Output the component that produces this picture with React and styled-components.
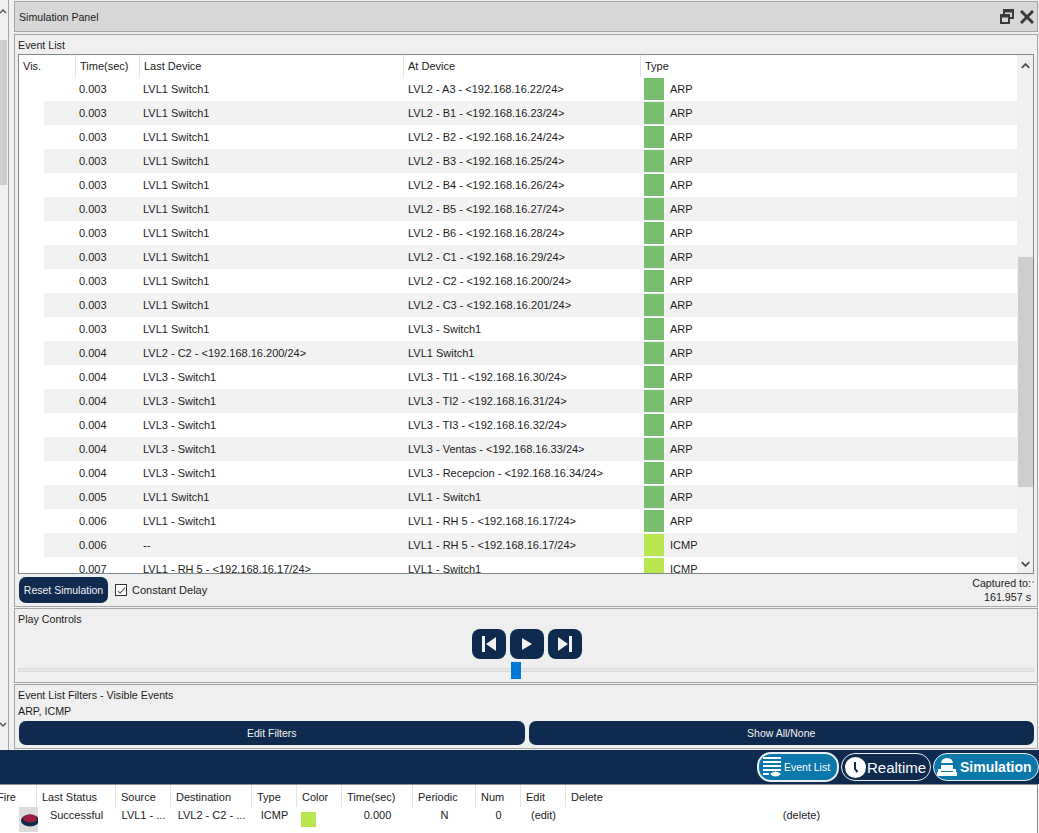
import styled, { createGlobalStyle } from "styled-components";

const Global = createGlobalStyle`
    html, body { margin: 0; padding: 0; background: #f0f0f0; }
    body { font-family: "Liberation Sans", Arial, sans-serif; font-size: 11px; color: #1c1c1c; }
`

const EVENTS = [
    ["0.003", "LVL1 Switch1", "LVL2 - A3 - <192.168.16.22/24>", "ARP"],
    ["0.003", "LVL1 Switch1", "LVL2 - B1 - <192.168.16.23/24>", "ARP"],
    ["0.003", "LVL1 Switch1", "LVL2 - B2 - <192.168.16.24/24>", "ARP"],
    ["0.003", "LVL1 Switch1", "LVL2 - B3 - <192.168.16.25/24>", "ARP"],
    ["0.003", "LVL1 Switch1", "LVL2 - B4 - <192.168.16.26/24>", "ARP"],
    ["0.003", "LVL1 Switch1", "LVL2 - B5 - <192.168.16.27/24>", "ARP"],
    ["0.003", "LVL1 Switch1", "LVL2 - B6 - <192.168.16.28/24>", "ARP"],
    ["0.003", "LVL1 Switch1", "LVL2 - C1 - <192.168.16.29/24>", "ARP"],
    ["0.003", "LVL1 Switch1", "LVL2 - C2 - <192.168.16.200/24>", "ARP"],
    ["0.003", "LVL1 Switch1", "LVL2 - C3 - <192.168.16.201/24>", "ARP"],
    ["0.003", "LVL1 Switch1", "LVL3 - Switch1", "ARP"],
    ["0.004", "LVL2 - C2 - <192.168.16.200/24>", "LVL1 Switch1", "ARP"],
    ["0.004", "LVL3 - Switch1", "LVL3 - TI1 - <192.168.16.30/24>", "ARP"],
    ["0.004", "LVL3 - Switch1", "LVL3 - TI2 - <192.168.16.31/24>", "ARP"],
    ["0.004", "LVL3 - Switch1", "LVL3 - TI3 - <192.168.16.32/24>", "ARP"],
    ["0.004", "LVL3 - Switch1", "LVL3 - Ventas - <192.168.16.33/24>", "ARP"],
    ["0.004", "LVL3 - Switch1", "LVL3 - Recepcion - <192.168.16.34/24>", "ARP"],
    ["0.005", "LVL1 Switch1", "LVL1 - Switch1", "ARP"],
    ["0.006", "LVL1 - Switch1", "LVL1 - RH 5 - <192.168.16.17/24>", "ARP"],
    ["0.006", "--", "LVL1 - RH 5 - <192.168.16.17/24>", "ICMP"],
    ["0.007", "LVL1 - RH 5 - <192.168.16.17/24>", "LVL1 - Switch1", "ICMP"],
]

const TYPE_COLORS = { ARP: "#77bf6f", ICMP: "#b9e650" }
const BOTTOM_COLS = ["Fire", "Last Status", "Source", "Destination", "Type", "Color", "Time(sec)", "Periodic", "Num", "Edit", "Delete"]

export default function App() {
    return (
        <Page>
            <Global />
            <Workspace>
                <LeftStrip>
                    <StripArrow viewBox="0 0 8 8"><path d="M0 5 L3 2 L6 5" /></StripArrow>
                    <StripThumb />
                    <StripArrow viewBox="0 0 8 8"><path d="M0 3 L3 6 L6 3" /></StripArrow>
                </LeftStrip>
                <Panels>
                    <TitleBar>
                        <TitleText>Simulation Panel</TitleText>
                        <TitleIcons>
                            <svg width="14" height="15" viewBox="0 0 14 15" fill="none" stroke="#3a3a3a" strokeWidth="2">
                                <path d="M4 5 V1 H13 V9 H9" />
                                <path d="M4 2 H13" strokeWidth="3" />
                                <rect x="1" y="6" width="8" height="8" />
                                <path d="M1 7 H9" strokeWidth="3" />
                            </svg>
                            <svg width="14" height="14" viewBox="0 0 14 14" fill="none" stroke="#3a3a3a" strokeWidth="3">
                                <path d="M1 1 L13 13 M13 1 L1 13" />
                            </svg>
                        </TitleIcons>
                    </TitleBar>

                    <EventGroup>
                        <GroupLabel>Event List</GroupLabel>
                        <TableFrame>
                            <TableBody>
                                <HeaderRow>
                                    <HeadCell>Vis.</HeadCell>
                                    <HeadCell>Time(sec)</HeadCell>
                                    <HeadCell>Last Device</HeadCell>
                                    <HeadCell>At Device</HeadCell>
                                    <HeadCell>Type</HeadCell>
                                </HeaderRow>
                                {EVENTS.map((e, i) => (
                                    <EventRow key={i}>
                                        <VisCell />
                                        <RowContent $striped={i % 2 === 1}>
                                            <div>{e[0]}</div>
                                            <div>{e[1]}</div>
                                            <div>{e[2]}</div>
                                            <TypeCell>
                                                <Swatch $color={TYPE_COLORS[e[3]]} />
                                                {e[3]}
                                            </TypeCell>
                                        </RowContent>
                                    </EventRow>
                                ))}
                            </TableBody>
                            <Scrollbar>
                                <ScrollArrow viewBox="0 0 16 23"><path d="M4 13 L8 9 L12 13" /></ScrollArrow>
                                <ScrollThumb />
                                <ScrollArrow viewBox="0 0 16 17"><path d="M4 6 L8 10 L12 6" /></ScrollArrow>
                            </Scrollbar>
                        </TableFrame>
                        <EventFooter>
                            <ResetButton>Reset Simulation</ResetButton>
                            <CheckBox>
                                <svg width="11" height="11" viewBox="0 0 11 11" fill="none" stroke="#666" strokeWidth="1.2">
                                    <path d="M2 6 L4.5 8.5 L10 2" />
                                </svg>
                            </CheckBox>
                            <span>Constant Delay</span>
                            <Captured>Captured to:<br />161.957 s</Captured>
                        </EventFooter>
                    </EventGroup>

                    <PlayGroup>
                        <GroupLabel>Play Controls</GroupLabel>
                        <PlayButtons>
                            <PlayButton>
                                <svg width="16" height="16" viewBox="0 0 16 16" fill="#f2f2f2">
                                    <rect x="1" y="0" width="3" height="16" /><path d="M15 1 V15 L5 8 Z" />
                                </svg>
                            </PlayButton>
                            <PlayButton>
                                <svg width="16" height="16" viewBox="0 0 16 16" fill="#f2f2f2"><path d="M3 2 V14 L13 8 Z" /></svg>
                            </PlayButton>
                            <PlayButton>
                                <svg width="16" height="16" viewBox="0 0 16 16" fill="#f2f2f2">
                                    <rect x="12" y="0" width="3" height="16" /><path d="M1 1 V15 L11 8 Z" />
                                </svg>
                            </PlayButton>
                        </PlayButtons>
                        <SliderTrack><SliderThumb /></SliderTrack>
                    </PlayGroup>

                    <FilterGroup>
                        <FilterText>Event List Filters - Visible Events</FilterText>
                        <FilterText>ARP, ICMP</FilterText>
                        <FilterButtons>
                            <FilterButton>Edit Filters</FilterButton>
                            <FilterButton>Show All/None</FilterButton>
                        </FilterButtons>
                    </FilterGroup>
                </Panels>
            </Workspace>

            <ModeBar>
                <ModeButton $active $tall $width={82} $pad={4}>
                    <svg width="18" height="20" viewBox="0 0 18 20" fill="#fff">
                        <rect x="0" y="0" width="18" height="2" />
                        <rect x="0" y="4" width="18" height="2" />
                        <rect x="0" y="8" width="18" height="2" />
                        <rect x="0" y="12" width="18" height="2" />
                        <rect x="0" y="16" width="6" height="2" />
                        <path d="M7 17 Q12.5 12 18 17 Q12.5 22 7 17 Z" />
                    </svg>
                    <ModeLabel $size={10.5}>Event List</ModeLabel>
                </ModeButton>
                <ModeButton $width={90} $pad={3} $gap={1}>
                    <svg width="21" height="21" viewBox="0 0 21 21">
                        <circle cx="10.5" cy="10.5" r="10.5" fill="#fff" />
                        <path d="M10 5 V12 L12.5 15" fill="none" stroke="#0e2a4f" strokeWidth="2" />
                    </svg>
                    <ModeLabel $size={15}>Realtime</ModeLabel>
                </ModeButton>
                <ModeButton $active $width={106} $pad={3}>
                    <svg width="20" height="18" viewBox="0 0 20 18" fill="#fff">
                        <path d="M4 13 V6 Q4 0 10 0 Q16 0 16 6 V13 Z" />
                        <rect x="4" y="5" width="12" height="2" fill="#0a78aa" />
                        <rect x="0" y="14" width="20" height="4" />
                        <rect x="1" y="11" width="3" height="3" />
                        <rect x="16" y="11" width="3" height="3" />
                    </svg>
                    <ModeLabel $size={14} $bold>Simulation</ModeLabel>
                </ModeButton>
            </ModeBar>

            <BottomTable>
                <BottomGrid>
                    {BOTTOM_COLS.map((c, i) => <BottomHead key={c} $first={i === 0}>{c}</BottomHead>)}
                </BottomGrid>
                <BottomGrid>
                    <FireCell>
                        <svg width="19" height="24" viewBox="0 0 19 24">
                            <ellipse cx="11" cy="13.5" rx="9" ry="6" fill="#0e2a4f" />
                            <ellipse cx="11" cy="11.5" rx="7" ry="4" fill="#a01c3c" />
                        </svg>
                    </FireCell>
                    <BottomCell>Successful</BottomCell>
                    <BottomCell>LVL1 - ...</BottomCell>
                    <BottomCell>LVL2 - C2 - ...</BottomCell>
                    <BottomCell>ICMP</BottomCell>
                    <ColorCell><ColorSwatch /></ColorCell>
                    <BottomCell>0.000</BottomCell>
                    <BottomCell>N</BottomCell>
                    <BottomCell>0</BottomCell>
                    <BottomCell>(edit)</BottomCell>
                    <BottomCell>(delete)</BottomCell>
                </BottomGrid>
            </BottomTable>
        </Page>
    )
}

const Page = styled.div`
    width: 1039px;
    height: 833px;
    overflow: hidden;
    display: flex;
    flex-direction: column;
    background: #f0f0f0;
`

const Workspace = styled.div`
    height: 750px;
    display: flex;
    flex-shrink: 0;
`

const LeftStrip = styled.div`
    width: 9px;
    height: 750px;
    box-sizing: border-box;
    border-right: 1px solid #a5a5a5;
    margin-right: 5px;
    background: #f0f0f0;
    display: flex;
    flex-direction: column;
    padding: 8px 0 22px;
`

const StripArrow = styled.svg`
    width: 8px;
    height: 8px;
    flex-shrink: 0;
    fill: none;
    stroke: #555;
    stroke-width: 1.5;
`

const StripThumb = styled.div`
    width: 7px;
    height: 145px;
    margin-top: 24px;
    margin-bottom: auto;
    background: #cdcdcd;
`

const Panels = styled.div`
    width: 1024px;
    display: flex;
    flex-direction: column;
    padding-top: 1px;
    box-sizing: border-box;
`

const TitleBar = styled.div`
    height: 31px;
    box-sizing: border-box;
    border: 1px solid #a6a6a6;
    background: #d7d7d7;
    display: flex;
    align-items: center;
    justify-content: space-between;
    padding: 0 3px 0 4px;
`

const TitleText = styled.span`
    font-size: 10.6px;
`

const TitleIcons = styled.div`
    display: flex;
    align-items: center;
    gap: 6px;
`

const EventGroup = styled.div`
    height: 573px;
    margin-top: 2px;
    box-sizing: border-box;
    border: 1px solid #a6a6a6;
    padding: 0 3px;
    display: flex;
    flex-direction: column;
    background: #efefef;
`

const GroupLabel = styled.div`
    height: 19px;
    line-height: 20px;
    font-size: 10.7px;
`

const TableFrame = styled.div`
    height: 520px;
    box-sizing: border-box;
    border: 1px solid #7f8a8f;
    background: #fff;
    display: flex;
    overflow: hidden;
`

const TableBody = styled.div`
    flex: 1;
    min-width: 0;
    overflow: hidden;
`

const HeaderRow = styled.div`
    height: 22px;
    display: grid;
    grid-template-columns: 57px 64px 264px 237px 1fr;
`

const HeadCell = styled.div`
    padding-left: 4px;
    line-height: 22px;
    border-right: 1px solid #e3e3e3;
    white-space: nowrap;
    &:last-child { border-right: none; }
`

const EventRow = styled.div`
    height: 24px;
    display: flex;
`

const VisCell = styled.div`
    width: 25px;
    flex-shrink: 0;
`

const RowContent = styled.div`
    flex: 1;
    display: grid;
    grid-template-columns: 64px 265px 236px 1fr;
    align-items: center;
    padding-left: 35px;
    background: ${p => (p.$striped ? "#f2f2f2" : "#fff")};
    white-space: nowrap;
`

const TypeCell = styled.div`
    display: flex;
    align-items: center;
    gap: 6px;
`

const Swatch = styled.span`
    width: 20px;
    height: 22px;
    background: ${p => p.$color};
`

const Scrollbar = styled.div`
    width: 16px;
    flex-shrink: 0;
    box-sizing: border-box;
    padding-left: 1px;
    background: #f0f0f0;
    display: flex;
    flex-direction: column;
`

const ScrollArrow = styled.svg`
    width: 15px;
    flex-shrink: 0;
    fill: none;
    stroke: #505050;
    stroke-width: 2;
    &:first-child { height: 23px; }
    &:last-child { height: 17px; }
`

const ScrollThumb = styled.div`
    height: 230px;
    margin-top: 179px;
    margin-bottom: auto;
    background: #cdcdcd;
`

const EventFooter = styled.div`
    flex: 1;
    display: flex;
    align-items: center;
    padding-left: 1px;
`

const ResetButton = styled.button`
    width: 89px;
    height: 26px;
    padding: 0;
    border: none;
    border-radius: 7px;
    background: #0e2a4f;
    color: #f2f2f2;
    font: inherit;
    font-size: 10.5px;
    white-space: nowrap;
`

const CheckBox = styled.span`
    width: 12px;
    height: 12px;
    margin: 0 5px 0 7px;
    box-sizing: border-box;
    border: 1px solid #333;
    background: #fff;
    display: flex;
    align-items: center;
    justify-content: center;
`

const Captured = styled.div`
    position: relative;
    margin-left: auto;
    text-align: right;
    font-size: 10.7px;
    line-height: 14px;
    padding-right: 3px;

    &::after {
        content: "";
        position: absolute;
        right: 0;
        top: 5px;
        width: 2px;
        height: 2px;
        background: #b4b4b4;
    }
`

const PlayGroup = styled.div`
    height: 75px;
    margin-top: 1px;
    box-sizing: border-box;
    border: 1px solid #a6a6a6;
    padding: 0 3px;
    display: flex;
    flex-direction: column;
    background: #efefef;
`

const PlayButtons = styled.div`
    display: flex;
    justify-content: center;
    gap: 4px;
    margin-top: 1px;
    padding-left: 2px;
`

const PlayButton = styled.button`
    width: 34px;
    height: 30px;
    padding: 0;
    border: none;
    border-radius: 8px;
    background: #0e2a4f;
    display: flex;
    align-items: center;
    justify-content: center;
`

const SliderTrack = styled.div`
    position: relative;
    height: 4px;
    margin-top: 9px;
    box-sizing: border-box;
    border: 1px solid #d8dcd8;
    background: #e6e6e6;
`

const SliderThumb = styled.div`
    position: absolute;
    left: 492px;
    top: -7px;
    width: 10px;
    height: 17px;
    background: #0078d7;
`

const FilterGroup = styled.div`
    height: 65px;
    margin-top: 1px;
    box-sizing: border-box;
    border: 1px solid #a6a6a6;
    padding: 2px 3px 0 3px;
    background: #efefef;
`

const FilterText = styled.div`
    height: 16px;
    line-height: 16px;
    font-size: 10.7px;
`

const FilterButtons = styled.div`
    display: flex;
    gap: 4px;
    margin-top: 2px;
    padding-left: 1px;
`

const FilterButton = styled.button`
    flex: 1;
    height: 24px;
    padding: 0;
    border: none;
    border-radius: 7px;
    background: #0e2a4f;
    color: #f2f2f2;
    font: inherit;
    font-size: 10.5px;
`

const ModeBar = styled.div`
    height: 34px;
    flex-shrink: 0;
    box-sizing: border-box;
    background: #0e2a4f;
    display: flex;
    justify-content: flex-end;
    align-items: center;
    gap: 2px;
`

const ModeButton = styled.div`
    width: ${p => p.$width}px;
    height: ${p => (p.$tall ? 30 : 28)}px;
    box-sizing: border-box;
    border: ${p => (p.$tall ? 2 : 1)}px solid #e8eef2;
    border-radius: 14px;
    background: ${p => (p.$active ? "#0a78aa" : "#0e2a4f")};
    color: #fff;
    display: flex;
    align-items: center;
    gap: ${p => p.$gap ?? 3}px;
    padding-left: ${p => p.$pad}px;
    overflow: hidden;
    white-space: nowrap;
`

const ModeLabel = styled.span`
    font-size: ${p => p.$size}px;
    font-weight: ${p => (p.$bold ? 700 : 400)};
`

const BottomTable = styled.div`
    flex: 1;
    width: 1038px;
    box-sizing: border-box;
    border-top: 1px solid #8c8c8c;
    border-right: 1px solid #8c8c8c;
    background: #fff;
    overflow: hidden;
`

const BottomGrid = styled.div`
    display: grid;
    grid-template-columns: 37px 79px 55px 81px 45px 45px 71px 63px 45px 45px 1fr;
`

const BottomHead = styled.div`
    height: 22px;
    line-height: 24px;
    padding-left: ${p => (p.$first ? 0 : 5)}px;
    margin-left: ${p => (p.$first ? -3 : 0)}px;
    border-right: 1px solid #e3e3e3;
    white-space: nowrap;
    &:last-child { border-right: none; }
`

const BottomCell = styled.div`
    height: 25px;
    line-height: 16px;
    text-align: center;
    white-space: nowrap;
`

const FireCell = styled.div`
    height: 25px;
    width: 19px;
    margin-left: 19px;
    background: #dcdcdc;
`

const ColorCell = styled.div`
    height: 25px;
    padding: 5px 0 0 4px;
    box-sizing: border-box;
`

const ColorSwatch = styled.div`
    width: 15px;
    height: 15px;
    background: #b9e650;
`
